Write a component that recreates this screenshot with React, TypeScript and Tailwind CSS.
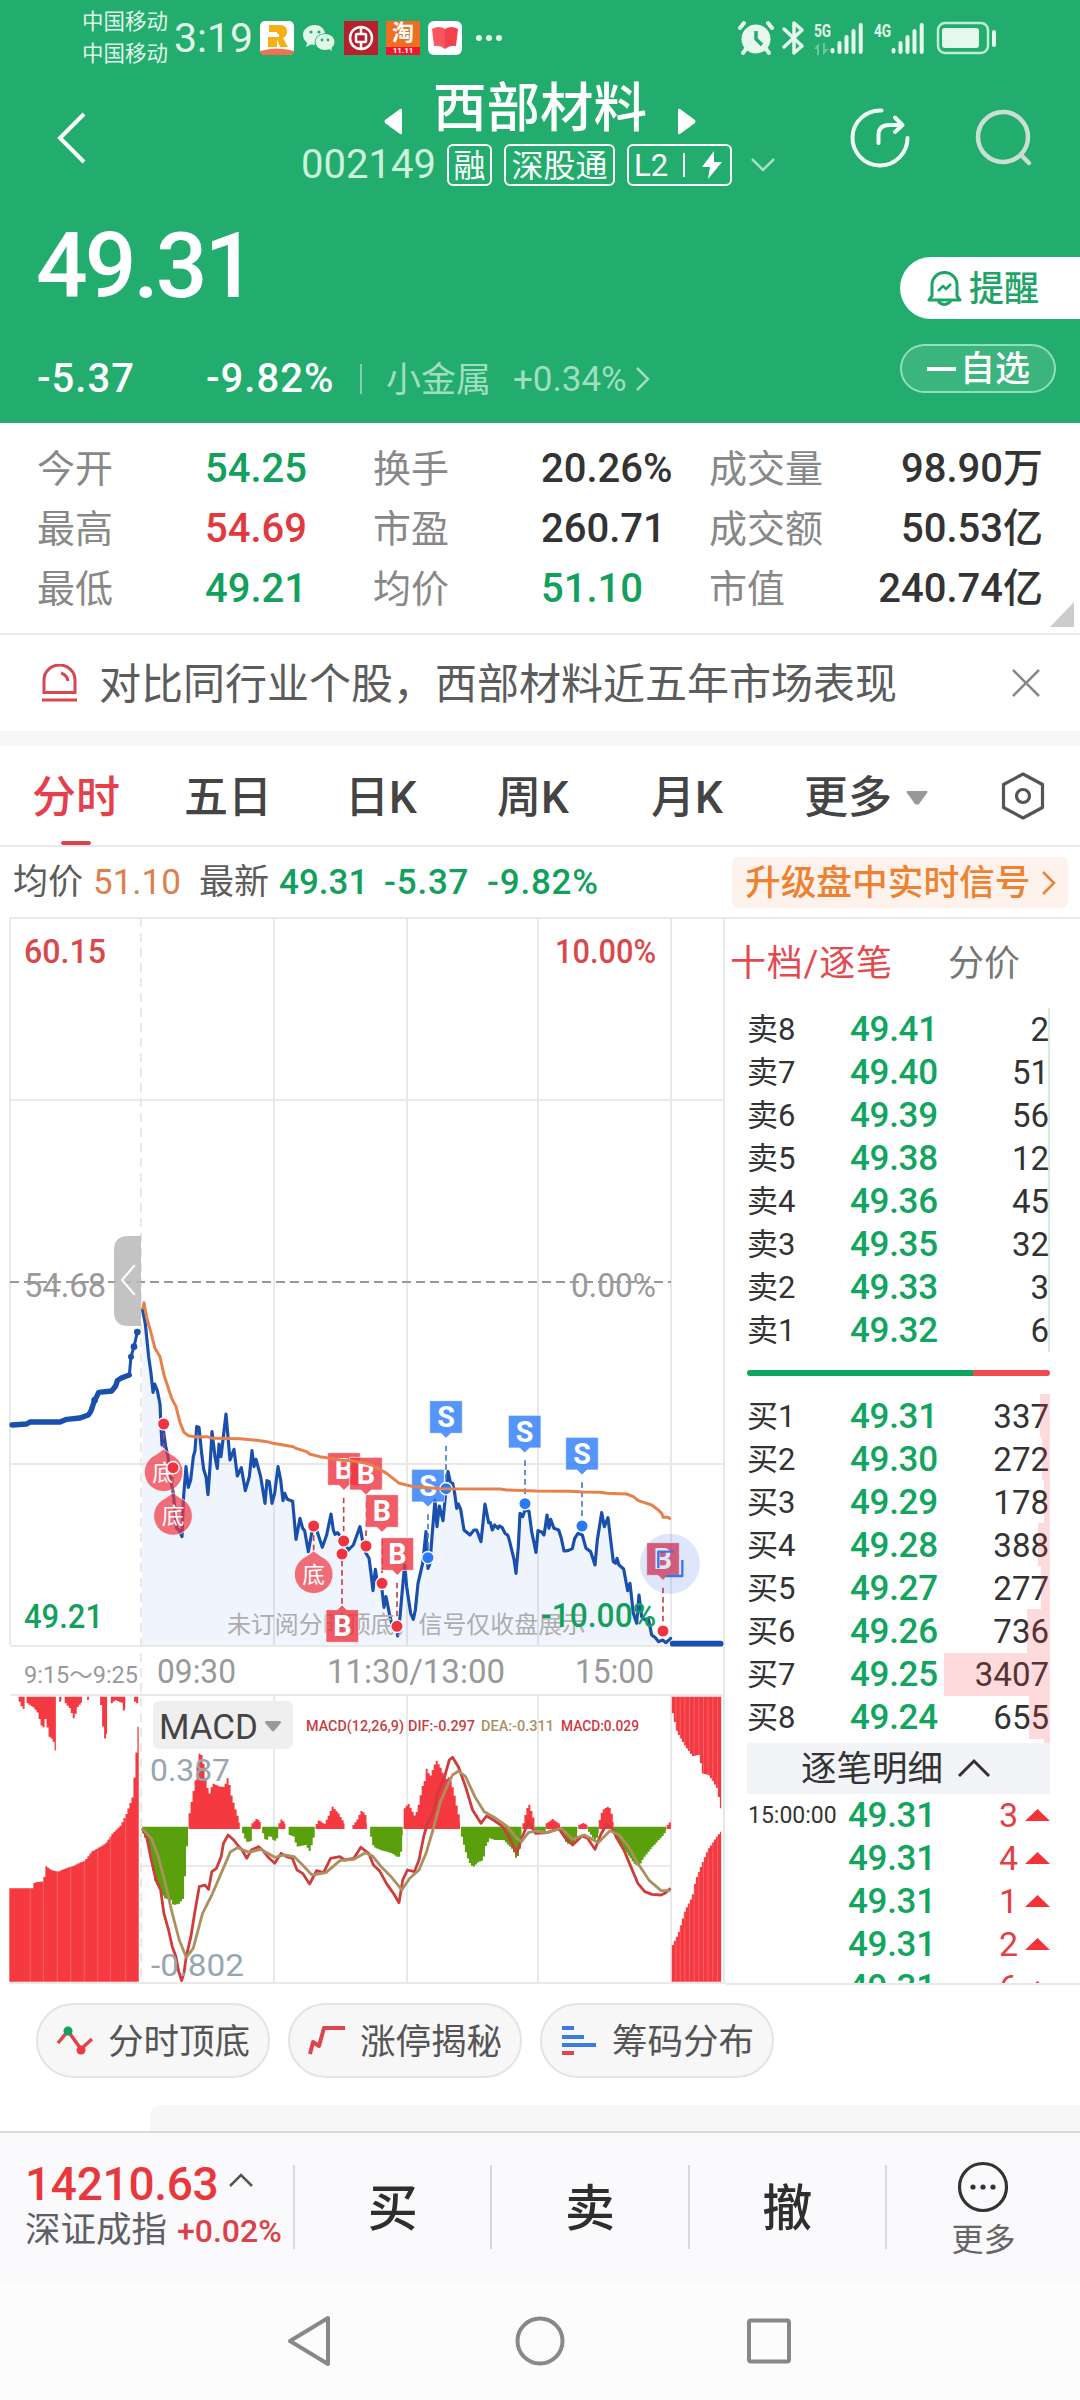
import React from 'react';

type Point = [number, number];

const stats = [
  { label: '今开', value: '54.25', color: 'text-[#12a05c]' },
  { label: '换手', value: '20.26%', color: 'text-[#333]' },
  { label: '成交量', value: '98.90万', color: 'text-[#333]' },
  { label: '最高', value: '54.69', color: 'text-[#e0393e]' },
  { label: '市盈', value: '260.71', color: 'text-[#333]' },
  { label: '成交额', value: '50.53亿', color: 'text-[#333]' },
  { label: '最低', value: '49.21', color: 'text-[#12a05c]' },
  { label: '均价', value: '51.10', color: 'text-[#12a05c]' },
  { label: '市值', value: '240.74亿', color: 'text-[#333]' },
];

const sells = [
  { label: '卖8', price: '49.41', qty: 2 },
  { label: '卖7', price: '49.40', qty: 51 },
  { label: '卖6', price: '49.39', qty: 56 },
  { label: '卖5', price: '49.38', qty: 12 },
  { label: '卖4', price: '49.36', qty: 45 },
  { label: '卖3', price: '49.35', qty: 32 },
  { label: '卖2', price: '49.33', qty: 3 },
  { label: '卖1', price: '49.32', qty: 6 },
];

const buys = [
  { label: '买1', price: '49.31', qty: 337, bar: 10 },
  { label: '买2', price: '49.30', qty: 272, bar: 8 },
  { label: '买3', price: '49.29', qty: 178, bar: 6 },
  { label: '买4', price: '49.28', qty: 388, bar: 12 },
  { label: '买5', price: '49.27', qty: 277, bar: 9 },
  { label: '买6', price: '49.26', qty: 736, bar: 23 },
  { label: '买7', price: '49.25', qty: 3407, bar: 106 },
  { label: '买8', price: '49.24', qty: 655, bar: 21 },
];

const ticks = [
  { time: '15:00:00', qty: 3 },
  { time: '', qty: 4 },
  { time: '', qty: 1 },
  { time: '', qty: 2 },
  { time: '', qty: 6 },
];

// Chart series, three units to one pixel
const preOpen =
  '36,675 80,672 90,666 180,666 200,658 240,654 265,645 272,635 276,624 284,600 290,590 296,577 335,573 347,558 352,542 362,535 388,525';

const morning =
  '428,330 436,372 446,470 453,520 459,577 464,552 472,572 480,612 482,660 486,735 490,690 497,738 505,775 510,830 520,880 530,985 537,990 546,1010 550,900 558,800 565,862 572,840 580,770 585,752 590,680 597,682 605,760 611,808 618,830 624,884 630,800 636,695 645,770 652,805 657,732 663,770 678,642 690,780 702,748 712,828 724,803 736,872 748,830 756,752 762,800 768,778 782,830 795,910 801,842 808,845 816,910 824,880 834,800 842,840 849,902 854,880 862,898 878,904 888,1018 900,955 908,985 914,992 925,1055 935,1000 941,978 950,990 967,1042 980,1005 993,942 1000,990 1005,1003 1013,998 1030,1022 1045,1050 1060,1035 1080,980 1090,1035 1098,1060 1107,1074 1113,1120 1119,1172 1126,1108 1132,1150 1145,1160 1152,1222 1158,1190 1168,1240 1175,1270 1190,1280 1193,1308';

const afternoon: Point[] = [
  [175, 840], [180, 800], [187, 720], [194, 645], [200, 710], [212, 790], [220, 808], [226, 780], [234, 700], [248, 640],
  [258, 545], [264, 655], [270, 640], [276, 560], [285, 450], [291, 530], [298, 468], [309, 512], [318, 420], [324, 365],
  [332, 400], [338, 400], [344, 430], [350, 475], [355, 462], [362, 478], [372, 540], [390, 555], [402, 540], [410, 540],
  [423, 575], [435, 462], [446, 518], [451, 518], [457, 540], [464, 525], [474, 535], [478, 528], [486, 532], [495, 550],
  [503, 555], [508, 570], [522, 628], [528, 670], [535, 590], [540, 490], [548, 500], [555, 480], [567, 484], [575, 545],
  [588, 607], [594, 542], [604, 545], [612, 555], [616, 530], [621, 495], [627, 535], [632, 508], [642, 535], [656, 540],
  [664, 565], [672, 603], [684, 602], [697, 596], [704, 565], [714, 550], [727, 555], [738, 595], [752, 605], [765, 645],
  [772, 570], [785, 488], [793, 530], [804, 503], [812, 570], [820, 635], [827, 640], [831, 625], [837, 645], [851, 657],
  [863, 722], [870, 700], [880, 790], [890, 820], [897, 735], [905, 800], [915, 810], [925, 805], [935, 855], [945, 862],
  [956, 875], [968, 870], [978, 878], [992, 865],
];

const average =
  '428,328 432,308 440,352 452,395 465,445 480,470 492,525 505,565 515,595 528,620 540,668 552,697 565,707 590,711 620,710 640,715 720,716 770,721 800,725 820,730 850,735 880,740 890,746 920,755 930,763 960,770 990,775 1020,780 1060,783 1090,788 1120,797 1160,820 1198,850 1240,860 1270,862 1320,866 1500,867 1520,870 1610,873 1710,874 1750,876 1800,877 1820,880 1880,882 1900,890 1915,902 1940,910 1955,915 1975,930 1985,940 1990,952 2005,952 2012,958';

const price = morning + ' ' + afternoon.map(([x, y]) => `${x + 1020},${y + 450}`).join(' ');

const dif =
  '305,445 315,470 325,540 335,600 345,630 352,700 362,750 370,800 378,830 383,870 390,902 395,880 400,830 410,770 418,700 428,620 440,615 448,628 455,575 465,565 475,530 480,490 490,465 502,480 512,498 520,510 530,535 540,510 555,500 565,512 575,530 590,550 604,520 615,530 628,535 638,570 650,580 665,612 680,572 695,578 710,535 730,530 740,540 760,535 775,502 792,520 802,555 815,572 830,610 845,640 857,668 865,600 875,570 890,575 900,540 910,470 918,430 930,400 940,340 955,290 965,240 972,232 985,262 1000,320 1015,390 1033,430 1045,408 1060,420 1080,440 1095,475 1110,520 1122,470 1135,425 1150,460 1175,458 1200,445 1215,475 1230,495 1250,468 1262,475 1278,508 1290,465 1303,432 1315,445 1325,475 1340,510 1355,560 1370,610 1385,635 1400,643 1420,645 1430,638 1440,625';

const dea =
  '305,445 325,475 340,530 355,610 370,700 385,780 400,832 415,805 435,700 455,645 475,580 495,515 510,503 535,517 560,508 590,532 610,525 632,530 650,555 670,585 700,578 730,542 760,538 785,518 800,528 820,562 840,590 863,630 880,595 900,570 915,520 930,450 945,370 960,320 972,285 985,273 1000,290 1020,350 1040,395 1065,415 1090,440 1110,475 1120,485 1135,458 1150,453 1175,458 1205,445 1230,477 1255,465 1285,488 1310,452 1330,465 1350,500 1370,550 1395,602 1420,632 1440,632';

const redBars: Point[][] = [
  [[405, 400], [412, 345], [418, 300], [425, 230], [428, 212], [434, 240], [440, 300], [447, 345], [455, 310], [470, 320], [480, 320], [488, 290], [494, 340], [502, 380], [510, 415], [515, 440]],
  [[540, 430], [550, 415], [560, 430]],
  [[598, 430], [603, 417], [613, 435]],
  [[678, 432], [683, 420], [695, 432], [703, 410], [712, 380], [725, 400], [740, 435]],
  [[757, 435], [765, 420], [774, 393], [782, 400], [788, 435]],
  [[867, 385], [875, 370], [882, 390], [890, 410], [898, 370], [905, 320], [911, 300], [914, 265], [922, 290], [935, 240], [945, 265], [955, 300], [963, 290], [972, 330], [980, 385], [988, 430]],
  [[1122, 430], [1128, 395], [1134, 370], [1142, 405], [1148, 435]],
  [[1172, 430], [1185, 417], [1203, 435]],
  [[1242, 435], [1252, 428], [1262, 438]],
  [[1286, 420], [1292, 390], [1306, 378], [1314, 410], [1318, 440]],
  [[1432, 435], [1441, 420]],
];

const greenBars: Point[][] = [
  [[305, 460], [315, 490], [325, 560], [330, 600], [345, 640], [352, 655], [365, 660], [370, 675], [382, 672], [392, 655], [396, 575], [400, 490], [404, 450]],
  [[520, 460], [527, 485], [537, 485], [541, 450]],
  [[563, 460], [569, 485], [578, 465], [587, 485], [596, 470], [598, 448]],
  [[620, 465], [630, 470], [635, 500], [655, 495], [664, 515], [670, 480], [676, 455]],
  [[795, 470], [800, 500], [815, 510], [828, 515], [840, 520], [850, 530], [858, 530], [862, 490], [865, 450]],
  [[990, 470], [997, 510], [1005, 545], [1014, 562], [1025, 547], [1036, 540], [1041, 500], [1050, 475], [1060, 480], [1080, 480], [1090, 495], [1100, 510], [1108, 540], [1116, 500], [1120, 460]],
  [[1148, 452], [1172, 458]],
  [[1205, 460], [1215, 490], [1232, 495], [1240, 455]],
  [[1263, 455], [1275, 480], [1283, 470], [1286, 450]],
  [[1318, 460], [1330, 490], [1345, 520], [1360, 550], [1370, 560], [1380, 535], [1400, 500], [1420, 470], [1431, 450]],
];

const auctionTop: Point[][] = [
  [[40, 65], [48, 90], [53, 60]],
  [[57, 70], [68, 80], [78, 95], [90, 150], [96, 115], [104, 170], [112, 180], [120, 228]],
  [[127, 65], [132, 60]],
  [[139, 70], [148, 85], [157, 118], [165, 80], [176, 65]],
  [[187, 60], [191, 60]],
  [[215, 75], [220, 150], [227, 200], [230, 70]],
  [[238, 70], [246, 60], [262, 70], [266, 118], [269, 70]],
  [[288, 65], [297, 75]],
];
const auctionBottom: Point[] = [[20, 625], [68, 625], [72, 607], [92, 604], [96, 557], [108, 570], [122, 575], [140, 565], [160, 555], [182, 540], [195, 515], [210, 503], [225, 490], [240, 460], [258, 435], [270, 400], [283, 350], [290, 240], [294, 140], [298, 140]];
const closeTop: Point[] = [[1443, 100], [1452, 155], [1468, 195], [1485, 228], [1500, 225], [1507, 280], [1520, 285], [1530, 305], [1540, 330], [1545, 385], [1549, 385]];
const closeBottom: Point[] = [[1443, 795], [1455, 760], [1470, 690], [1485, 650], [1492, 600], [1505, 555], [1518, 510], [1535, 475], [1549, 450]];

// Turns a profile into a run of thin bars standing on the base line
const barPath = (profile: Point[], base: number) => {
  const step = 4.3;
  const end = profile[profile.length - 1][0];
  let d = `M${profile[0][0]} ${base}`;
  for (let x = profile[0][0]; x < end; x += step) {
    const i = Math.max(1, profile.findIndex((p) => p[0] > x));
    const [x0, y0] = profile[i - 1];
    const [x1, y1] = profile[i];
    const y = y0 + ((y1 - y0) * (x - x0)) / (x1 - x0);
    d += `V${y.toFixed(1)}H${Math.min(x + step, end).toFixed(1)}`;
  }
  return d + `V${base}Z`;
};

type LabelProps = {
  x: number;
  y: number;
  width: number;
  size: number;
  fill: string;
  weight?: number;
  children: string;
};

const Label: React.FC<LabelProps> = ({ x, y, width, size, fill, weight = 400, children }) => (
  <text x={x} y={y} textLength={width} lengthAdjust="spacingAndGlyphs" fontSize={size} fill={fill} fontWeight={weight}>
    {children}
  </text>
);

type FlagProps = { x: number; y: number; dot: Point; kind: 'B' | 'S'; up?: boolean };

const Flag: React.FC<FlagProps> = ({ x, y, dot, kind, up }) => {
  const color = kind === 'B' ? '#ef3340' : '#2a7af8';
  const line = kind === 'B' ? '#c9404c' : '#3f7fd0';
  return (
    <g>
      <path d={up ? `M${dot[0]} ${y - 18}V${dot[1]}` : `M${dot[0]} ${y + 135}V${dot[1]}`} stroke={line} strokeWidth="5" strokeDasharray="17 11" />
      <path
        d={
          up
            ? `M${x} ${y}H${x + 34}L${x + 48} ${y - 14}L${x + 62} ${y}H${x + 98}V${y + 98}H${x}Z`
            : `M${x} ${y}H${x + 98}V${y + 98}H${x + 64}L${x + 49} ${y + 113}L${x + 34} ${y + 98}H${x}Z`
        }
        fill={color}
        fillOpacity="0.8"
        stroke="#fff"
        strokeOpacity="0.7"
        strokeWidth="3"
      />
      <text x={x + 49} y={y + 80} fontSize="86" fontWeight="700" fill="#fff" textAnchor="middle">
        {kind}
      </text>
      <circle cx={dot[0]} cy={dot[1]} r="18.5" fill={color} stroke="#fff" strokeWidth="4" />
    </g>
  );
};

const Bottom: React.FC<{ x: number; y: number }> = ({ x, y }) => (
  <g>
    <path d={`M${x} ${y}V${y + 75}`} stroke="#c9404c" strokeWidth="5" strokeDasharray="17 11" />
    <path
      d={`M${x} ${y + 75}L${x + 22} ${y + 91}A58 58 0 1 1 ${x - 22} ${y + 91}Z`}
      fill="#ef3340"
      fillOpacity="0.7"
      stroke="#fff"
      strokeOpacity="0.7"
      strokeWidth="3"
    />
    <text x={x} y={y + 170} fontSize="68" fill="#fff" textAnchor="middle">
      底
    </text>
    <circle cx={x} cy={y} r="18.5" fill="#ef3340" stroke="#fff" strokeWidth="4" />
  </g>
);

const SignalBars = () => (
  <svg width="34" height="33" viewBox="0 0 34 33" stroke="#e6f8ee" strokeWidth="4" strokeLinecap="round">
    <path d="M2.5 28v1.500M9.500 21v9M16.500 15v15M23.500 9v21M30.700 3v27" />
  </svg>
);

const StatusBar = () => (
  <div className="flex h-[76px] items-center pl-[82px] text-[#e0f7ea]">
    <div className="flex w-[90px] flex-col gap-[10px] text-[21.5px] leading-[22px]">
      <span>中国移动</span>
      <span>中国移动</span>
    </div>
    <span className="ml-[2px] w-[84px] text-[41px] leading-none">3:19</span>
    <div className="ml-[2px] flex gap-2">
      <svg width="34" height="34" viewBox="0 0 34 34">
        <rect width="34" height="34" rx="5" fill="#fff" />
        <path d="M9 4h11q7 0 7 7 0 4-4 6l5 9h-8l-3-8v8H8V16h9V11H9z" fill="#f6b016" />
        <path d="M0 30q17-5 34 0v0q0 4-5 4H5q-5 0-5-4z" fill="#ef7350" />
        <path d="M8 13h11v3H8z" fill="#fff" />
      </svg>
      <svg width="34" height="34" viewBox="0 0 34 34" fill="#e0f7ea">
        <path d="M13 4C6 4 1 8.500 1 14q0 4.500 4 7.500L4 26l5-2.500 4 .500q-2-10 10-12C22 7 18 4 13 4z" />
        <ellipse cx="23" cy="21" rx="9.500" ry="8" />
        <path d="M26 27l4 3-1-5z" />
        <g fill="#22ac6e">
          <circle cx="9" cy="11" r="1.600" />
          <circle cx="17" cy="11" r="1.600" />
          <circle cx="20" cy="19" r="1.400" />
          <circle cx="26" cy="19" r="1.400" />
        </g>
      </svg>
      <svg width="34" height="34" viewBox="0 0 34 34" fill="none" stroke="#fff">
        <rect width="34" height="34" fill="#b8202b" stroke="none" />
        <circle cx="17" cy="17" r="11" strokeWidth="2.500" />
        <rect x="12" y="13" width="10" height="8" rx="1" strokeWidth="2.500" />
        <path d="M17 6v7M17 21v7" strokeWidth="2.500" />
      </svg>
      <div className="flex h-[34px] w-[34px] flex-col items-center bg-[#ee6f22]">
        <span className="h-[26px] text-[22px] leading-[24px] font-bold text-white">淘</span>
        <span className="h-2 w-full bg-[#f0152d] text-center text-[8px] leading-[7px] font-bold text-white">11.11</span>
      </div>
      <svg width="34" height="34" viewBox="0 0 34 34">
        <rect width="34" height="34" rx="6" fill="#fff" />
        <path d="M4 8q7-4 13 0v20q-5-4-11-3z" fill="#fb5560" />
        <path d="M30 8q-7-4-13 0v20q5-4 11-3z" fill="#f4414e" />
      </svg>
    </div>
    <svg className="ml-[13px]" width="28" height="8" viewBox="0 0 28 8" fill="#e0f7ea">
      <circle cx="4" cy="4" r="3" />
      <circle cx="14" cy="4" r="3" />
      <circle cx="24" cy="4" r="3" />
    </svg>
    <svg className="ml-[235px]" width="36" height="36" viewBox="0 0 36 36">
      <circle cx="18" cy="19" r="14.500" fill="#e6f8ee" />
      <path d="M2 8l4-5M34 8l-4-5M8 29l-3 4M28 29l3 4" stroke="#e6f8ee" strokeWidth="4" strokeLinecap="round" />
      <path d="M18 11v8l6 6" stroke="#22ac6e" strokeWidth="3.500" fill="none" />
    </svg>
    <svg className="ml-[7px]" width="24" height="36" viewBox="0 0 24 36" fill="none" stroke="#e6f8ee" strokeWidth="3.500" strokeLinejoin="round" strokeLinecap="round">
      <path d="M3 9l18 17-8 7V3l8 7L3 27" />
    </svg>
    <div className="ml-[9px] flex">
      <div className="flex w-4 flex-col gap-1">
        <span className="origin-left scale-x-[0.72] text-[19px] leading-[17px] font-bold">5G</span>
        <svg width="15" height="12" viewBox="0 0 15 12" fill="#69c89c">
          <path d="M5 0v12H3V6H0zM9 12V0h2v6h4z" />
        </svg>
      </div>
      <SignalBars />
    </div>
    <div className="ml-[10px] flex">
      <span className="w-[17px] origin-left scale-x-[0.72] text-[19px] leading-[17px] font-bold">4G</span>
      <SignalBars />
    </div>
    <svg className="ml-[11px]" width="62" height="34" viewBox="0 0 62 34">
      <rect x="2" y="2" width="50" height="30" rx="7" fill="none" stroke="#bdeed5" strokeWidth="2.500" />
      <rect x="6" y="7" width="37" height="20" rx="3" fill="#e6f8ee" />
      <rect x="56" y="9" width="4" height="17" rx="2" fill="#e6f8ee" />
    </svg>
  </div>
);

const Header = () => (
  <header className="h-[423px] bg-[#22ac6e] text-white">
    <StatusBar />
    <div className="flex h-[124px] items-start">
      <svg className="mt-[36px] ml-[56px]" width="32" height="52" viewBox="0 0 32 52" fill="none" stroke="#fff" strokeWidth="4">
        <path d="M28 2L4 26l24 24" />
      </svg>
      <div className="ml-[213px] flex w-[478px] flex-col">
        <div className="flex h-[64px] items-start pl-[83px]">
          <svg className="mt-[32px]" width="18" height="27" viewBox="0 0 18 27" fill="#fff">
            <path d="M18 2v23q0 2-2 1L1 15q-1-1 0-3L16 1q2-1 2 1z" />
          </svg>
          <span className="mt-[6px] ml-[31px] w-[213px] text-[53.5px] leading-none font-medium">西部材料</span>
          <svg className="mt-[32px] ml-[32px]" width="18" height="27" viewBox="0 0 18 27" fill="#fff">
            <path d="M0 2v23q0 2 2 1l15-11q1-1 0-3L2 1Q0 0 0 2z" />
          </svg>
        </div>
        <div className="mt-[4px] flex h-[42px] items-center">
          <span className="w-[146px] text-[40px] leading-none text-[#ccf2de]">002149</span>
          <span className="flex h-[42px] w-[45px] items-center justify-center rounded-md border-2 border-white pt-[2px] text-[32px] leading-none">融</span>
          <span className="ml-3 flex h-[42px] w-[111px] items-center justify-center rounded-md border-2 border-white pt-[2px] text-[32px] leading-none">深股通</span>
          <span className="ml-3 flex h-[42px] w-[105px] items-center rounded-md border-2 border-white pl-[5px] text-[31px] leading-none">
            L2
            <i className="ml-[15px] h-6 w-[2px] bg-white" />
            <svg className="ml-4" width="22" height="28" viewBox="0 0 22 28" fill="#fff">
              <path d="M13 0L1 16h8L7 28 21 11h-8z" />
            </svg>
          </span>
          <svg className="ml-[18px]" width="26" height="16" viewBox="0 0 26 16" fill="none" stroke="#a5dfc3" strokeWidth="2.500">
            <path d="M2 2l11 11L24 2" />
          </svg>
        </div>
      </div>
      <svg className="mt-[31px] ml-[70px]" width="64" height="62" viewBox="0 0 64 62" fill="none" stroke="#f0fff7" strokeWidth="4" strokeLinecap="round" strokeLinejoin="round">
        <path d="M32.500 3.500A27.500 27.500 0 1 0 58.500 31" />
        <path d="M29.500 36v-8q0-10 11-10H52M46 10.500l7.500 7.500-7.500 7" />
      </svg>
      <svg className="mt-[32px] ml-[60px]" width="60" height="60" viewBox="0 0 60 60" fill="none" stroke="#c9dfd3" strokeWidth="4.500" strokeLinecap="round">
        <circle cx="30" cy="29" r="25" />
        <path d="M49 48l7 7" />
      </svg>
    </div>
    <div className="flex h-[223px] justify-between">
      <div className="flex flex-col">
        <span className="mt-[21px] ml-[36px] text-[91px] leading-none font-medium tracking-[-3px]">49.31</span>
        <div className="mt-[47px] ml-[37px] flex items-center text-[40px] leading-none font-medium">
          <span className="w-[169px] tracking-[1px]">-5.37</span>
          <span className="w-[154px] tracking-[1px]">-9.82%</span>
          <i className="h-[30px] w-[2px] bg-[#7fd0a8]" />
          <span className="ml-[24px] w-[127px] pt-[2px] text-[35px] font-normal text-[#a0dec0]">小金属</span>
          <span className="w-[122px] text-[35px] font-normal text-[#a0dec0]">+0.34%</span>
          <svg width="16" height="26" viewBox="0 0 16 26" fill="none" stroke="#a0dec0" strokeWidth="2.500">
            <path d="M2 2l11 11L2 24" />
          </svg>
        </div>
      </div>
      <div className="flex w-[180px] flex-col">
        <div className="mt-[57px] flex h-[62px] items-center rounded-l-full bg-white pl-[27px] text-[35px] leading-none text-[#1fa467]">
          <svg className="mr-[7px]" width="35" height="36" viewBox="0 0 35 36" fill="none" stroke="#1fa467" strokeWidth="3" strokeLinejoin="round">
            <path d="M5 26V15a12.500 12.500 0 0 1 25 0v11l3 4H2z" />
            <path d="M11 21l5-5 3 3 5-5" strokeWidth="2.500" />
            <path d="M11 31q6 7 13 0" />
          </svg>
          <span className="pt-[3px] font-medium">提醒</span>
        </div>
        <div className="mt-[25px] flex h-[49px] w-[156px] items-center rounded-full border-2 border-[#8fe0b8] bg-[#3bb47e] pl-[25px] text-[35px] leading-none">
          <i className="mr-1 h-[4px] w-[29px] bg-white" />
          <span className="pt-[2px] font-medium">自选</span>
        </div>
      </div>
    </div>
  </header>
);

const Stats = () => (
  <div className="flex h-[212px] border-b-2 border-[#ebebeb]">
    <div className="mt-[16px] grid h-[180px] grid-cols-[168px_168px_168px_168px_115px_219px] grid-rows-3 items-center pl-[37px] text-[40px] leading-none">
      {stats.map((item, i) => (
        <React.Fragment key={item.label}>
          <span className="text-[38px] text-[#888]">{item.label}</span>
          <span className={`${item.color} font-medium ${i % 3 === 2 ? 'text-right' : ''}`}>{item.value}</span>
        </React.Fragment>
      ))}
    </div>
    <svg className="mt-[179px] ml-[7px]" width="24" height="25" viewBox="0 0 24 25" fill="#ccc">
      <path d="M24 0v25H0z" />
    </svg>
  </div>
);

const Notice = () => (
  <div className="flex h-[96px] items-center pr-[40px] pl-[41px]">
    <svg width="37" height="38" viewBox="0 0 37 38" fill="none" stroke="#d6474f" strokeWidth="3">
      <path d="M3 28.500V16a15.500 15 0 0 1 31 0v12.500z" />
      <path d="M1 36h35" />
      <path d="M20 9q6 2 7 8" />
    </svg>
    <span className="ml-[21px] flex-1 pt-[3px] text-[42px] leading-none text-[#5c5c5c]">对比同行业个股，西部材料近五年市场表现</span>
    <svg width="28" height="28" viewBox="0 0 28 28" stroke="#888" strokeWidth="2.500">
      <path d="M1 1l26 26M27 1L1 27" />
    </svg>
  </div>
);

const Tabs = () => (
  <div className="flex h-[101px] border-b-2 border-[#e8e8e8] pl-[32px] text-[44px] leading-none font-medium text-[#444]">
    <div className="flex w-[152px] flex-col">
      <span className="mt-[30px] text-[#e63e4b]">分时</span>
      <i className="mt-[21px] ml-[29px] h-1 w-[30px] rounded-sm bg-[#d9434f]" />
    </div>
    <span className="mt-[30px] w-[161px]">五日</span>
    <span className="mt-[30px] w-[152px]">日K</span>
    <span className="mt-[30px] w-[154px]">周K</span>
    <span className="mt-[30px] w-[153px]">月K</span>
    <span className="mt-[30px] w-[88px]">更多</span>
    <svg className="mt-[45px] ml-[14px]" width="22" height="14" viewBox="0 0 22 14" fill="#999">
      <path d="M1 0h20q1 1 0 2l-8 11q-2 1-4 0L1 2Q0 1 1 0z" />
    </svg>
    <svg className="mt-[25px] ml-[73px]" width="44" height="50" viewBox="0 0 44 50" fill="none" stroke="#555" strokeWidth="3.200" strokeLinejoin="round">
      <path d="M22 3L41.500 13.500v23L22 47 2.500 36.500v-23z" />
      <circle cx="22" cy="25" r="6.500" />
    </svg>
  </div>
);

const InfoRow = () => (
  <div className="flex h-[70px] items-center pt-[1px] pl-[13px] text-[35px] leading-none">
    <span className="w-[80px] text-[#5c5c5c]">均价</span>
    <span className="w-[106px] text-[#dc7f4c]">51.10</span>
    <span className="w-[80px] text-[#5c5c5c]">最新</span>
    <span className="w-[105px] font-medium text-[#12a05c]">49.31</span>
    <span className="w-[103px] font-medium tracking-[0.8px] text-[#12a05c]">-5.37</span>
    <span className="font-medium tracking-[0.8px] text-[#12a05c]">-9.82%</span>
    <div className="mr-3 ml-auto flex h-[51px] w-[336px] items-center rounded-md bg-[#fef3ec] pl-[13px] text-[35.7px] font-medium text-[#ec8232]">
      <span className="pt-[2px]">升级盘中实时信号</span>
      <svg className="ml-[10px]" width="16" height="26" viewBox="0 0 16 26" fill="none" stroke="#ec8232" strokeWidth="2.500">
        <path d="M2 2l11 11L2 24" />
      </svg>
    </div>
  </div>
);

const Chart = () => (
  <svg className="block shrink-0" width="726" height="1068" viewBox="0 917 726 1068">
    <g stroke="#e9e9e9" strokeWidth="2" fill="none">
      <path d="M10 918H726M10 918V1645M10 1100H724M10 1464H724M10 1646H724M724 918V1984M10 1695H724M10 1983H726" />
      <path d="M274 918V1645M407 918V1645M538 918V1645M671 918V1645M274 1695V1983M407 1695V1983M538 1695V1983M671 1695V1983M141 1866H671" />
      <path d="M141 918V1983" strokeDasharray="9 6" />
    </g>

    <Label x={24} y={963} width={82} size={34} fill="#d9484c" weight={500}>60.15</Label>
    <Label x={555} y={963} width={101} size={34} fill="#d9484c" weight={500}>10.00%</Label>
    <Label x={24} y={1297} width={82} size={34} fill="#999">54.68</Label>
    <Label x={571} y={1297} width={85} size={34} fill="#999">0.00%</Label>
    <Label x={24} y={1628} width={79} size={34} fill="#12a05c" weight={500}>49.21</Label>
    <path d="M10 1282H671" stroke="#999" strokeWidth="2" strokeDasharray="9 5" />

    <g transform="translate(0 1200) scale(.33333)" strokeLinejoin="round" strokeLinecap="round">
      <polygon points={`425,1335 ${price} 2012,1335`} fill="#2a62d8" fillOpacity="0.07" />
      <polyline points={preOpen} fill="none" stroke="#1a50ad" strokeWidth="16" />
      <polyline points="388,525 393,470 402,440 412,396" fill="none" stroke="#1a50ad" strokeWidth="9" />
      <g fill="#1a50ad">
        <circle cx="284" cy="600" r="10" />
        <circle cx="393" cy="470" r="9" />
        <circle cx="402" cy="440" r="10" />
        <circle cx="412" cy="396" r="10" />
      </g>
      <polyline points={price} fill="none" stroke="#1a50ad" strokeWidth="9.500" />
      <path d="M2018 1331H2162" stroke="#1a50ad" strokeWidth="17" />
      <path d="M423 108V378H385Q342 378 342 335V150Q342 108 385 108Z" fill="#b8b8b8" fillOpacity="0.85" />
      <path d="M403 197L366 240L403 283" fill="none" stroke="#fff" strokeWidth="6" />
    </g>

    <Label x={227} y={1633} width={359} size={24} fill="#adadad">未订阅分时顶底，信号仅收盘展示</Label>
    <Label x={541} y={1627} width={115} size={34} fill="#12a05c" weight={500}>-10.00%</Label>

    <g transform="translate(0 1200) scale(.33333)" strokeLinejoin="round">
      <Bottom x={491} y={672} />
      <Bottom x={519} y={803} />
      <Bottom x={941} y={978} />
      <Flag kind="B" x={983} y={758} dot={[1031, 1023]} />
      <Flag kind="B" x={1049} y={772} dot={[1098, 1038]} />
      <Flag kind="B" x={1097} y={884} dot={[1146, 1150]} />
      <Flag kind="B" x={1143} y={1013} dot={[1191, 1279]} />
      <Flag kind="B" x={978} y={1229} dot={[1026, 1062]} up />
      <Flag kind="S" x={1235} y={808} dot={[1284, 1073]} />
      <Flag kind="S" x={1289} y={602} dot={[1338, 866]} />
      <Flag kind="S" x={1525} y={646} dot={[1575, 911]} />
      <Flag kind="S" x={1697} y={712} dot={[1746, 978]} />
      <Flag kind="B" x={1940} y={1028} dot={[1989, 1293]} />
      <circle cx="2010" cy="1091" r="90" fill="#2a62e8" fillOpacity="0.16" />
      <path d="M1975 1105V1055H2022M2047 1080V1128H1998" fill="none" stroke="#3a76ea" strokeWidth="7" />
      <polyline points={average} fill="none" stroke="#e8804c" strokeWidth="9" />
    </g>

    <Label x={24} y={1683} width={114} size={23} fill="#999">9:15～9:25</Label>
    <Label x={157} y={1683} width={79} size={33} fill="#999">09:30</Label>
    <Label x={327} y={1683} width={178} size={33} fill="#999">11:30/13:00</Label>
    <Label x={575} y={1683} width={79} size={33} fill="#999">15:00</Label>

    <rect x="153" y="1701" width="140" height="48" rx="6" fill="#efefef" />
    <Label x={159} y={1739} width={99} size={35} fill="#444">MACD</Label>
    <path d="M266 1721H280Q282 1722 280 1724L274 1731Q273 1732 272 1731L266 1724Q264 1722 266 1721Z" fill="#999" />
    <g transform="translate(0 1680) scale(.46557 .33333)">
      <g fill="#f53941">
        {auctionTop.map((bars, i) => (
          <path key={i} d={barPath(bars, 50)} />
        ))}
        <path d={barPath(auctionBottom, 905)} />
        <path d={barPath(closeTop, 50)} />
        <path d={barPath(closeBottom, 905)} />
        {redBars.map((bars, i) => (
          <path key={i} d={barPath(bars, 447)} />
        ))}
      </g>
      <g fill="#5aa00c">
        {greenBars.map((bars, i) => (
          <path key={i} d={barPath(bars, 440)} />
        ))}
      </g>
      <path
        d="M65 625V905M93 604V905M123 575V905M152 558V905M181 541V905M210 503V905M237 470V905M270 400V905M1452 50V155M1461 50V175M1471 50V200M1481 50V220M1491 50V225M1501 50V230M1511 50V280M1521 50V285M1531 50V305M1541 50V330M1452 770V905M1461 735V905M1471 690V905M1481 660V905M1491 610V905M1501 570V905M1511 540V905M1521 505V905M1531 485V905M1541 465V905"
        stroke="#fff"
        strokeOpacity="0.35"
        strokeWidth="1.500"
      />
      <g fill="none" strokeWidth="2.800" strokeLinejoin="round">
        <polyline points={dif} stroke="#cf3c3c" vectorEffect="non-scaling-stroke" />
        <polyline points={dea} stroke="#ab9060" vectorEffect="non-scaling-stroke" />
      </g>
    </g>
    <Label x={306} y={1731} width={98} size={15} fill="#c63f42" weight={500}>MACD(12,26,9)</Label>
    <Label x={408} y={1731} width={67} size={15} fill="#c63f42" weight={500}>DIF:-0.297</Label>
    <Label x={481} y={1731} width={73} size={15} fill="#ab9060" weight={500}>DEA:-0.311</Label>
    <Label x={561} y={1731} width={78} size={15} fill="#d0383f" weight={500}>MACD:0.029</Label>
    <Label x={150} y={1781} width={80} size={32} fill="#98a6b2">0.387</Label>
    <Label x={151} y={1976} width={93} size={32} fill="#98a6b2">-0.802</Label>
  </svg>
);

const OrderBook = () => (
  <div className="flex h-[1068px] w-[354px] flex-col overflow-hidden border-y-2 border-[#e9e9e9] leading-none">
    <div className="flex h-[89px] shrink-0 items-center pl-[4px] text-[36px]">
      <span className="w-[218px] tracking-[0.8px] text-[#e34a50]">十档/逐笔</span>
      <span className="text-[#777]">分价</span>
    </div>
    <div className="ml-[21px] w-[303px] shrink-0 border-r-2 border-[#d5ebe0]">
      {sells.map((row) => (
        <div key={row.label} className="flex h-[43px] items-center text-[#333]">
          <span className="w-[103px] text-[31px]">{row.label}</span>
          <span className="text-[35px] font-medium tracking-[-0.3px] text-[#12a560]">{row.price}</span>
          <span className="-mr-[1px] ml-auto text-[33px]">{row.qty}</span>
        </div>
      ))}
    </div>
    <div className="my-[18px] ml-[21px] flex h-[6px] w-[303px] shrink-0 overflow-hidden rounded-full">
      <i className="w-[226px] bg-[#0ba560]" />
      <i className="flex-1 bg-[#f04b4f]" />
    </div>
    <div className="ml-[21px] w-[303px] shrink-0">
      {buys.map((row) => (
        <div key={row.label} className="relative flex h-[43.1px] items-center pt-[1px] text-[#333]">
          <span className="w-[103px] text-[31px]">{row.label}</span>
          <span className="text-[35px] font-medium tracking-[-0.3px] text-[#12a560]">{row.price}</span>
          <span className="ml-auto pr-[1px] text-[33px]">{row.qty}</span>
          <i className="absolute top-0 right-0 h-full bg-[#f5333f]/18" style={{ width: row.bar }} />
        </div>
      ))}
      <i className="ml-auto block h-[4px] w-[6px] bg-[#fcd9dc]" />
    </div>
    <div className="ml-[21px] flex h-[51px] w-[303px] shrink-0 items-center bg-[#f2f4f8] pl-[54px] text-[35.5px] text-[#333]">
      <span className="pt-[2px]">逐笔明细</span>
      <svg className="ml-[14px]" width="34" height="20" viewBox="0 0 34 20" fill="none" stroke="#333" strokeWidth="3">
        <path d="M2 18L17 3l15 15" />
      </svg>
    </div>
    <div className="ml-[21px] w-[303px] shrink-0">
      {ticks.map((tick, i) => (
        <div key={i} className="flex h-[43px] items-center">
          <span className="w-[101px] pl-[1px] text-[23px] text-[#333]">{tick.time}</span>
          <span className="text-[35px] font-medium tracking-[-0.3px] text-[#12a560]">49.31</span>
          <span className="ml-auto text-[34px] text-[#e34045]">{tick.qty}</span>
          <svg className="ml-[7px]" width="25" height="12" viewBox="0 0 25 12" fill="#f53237">
            <path d="M12.500 0L25 12H0z" />
          </svg>
        </div>
      ))}
    </div>
  </div>
);

const chips = [
  {
    name: '分时顶底',
    icon: (
      <>
        <path d="M2 18L12 6L25 24L36 14" stroke="#e0454c" strokeWidth="3.500" />
        <circle cx="12" cy="6" r="4.500" fill="#12a05c" />
        <circle cx="25" cy="25" r="4.500" fill="#ef3a40" />
      </>
    ),
  },
  {
    name: '涨停揭秘',
    icon: <path d="M2 29L5 17L11 21L16 3H37" stroke="#e0454c" strokeWidth="4" />,
  },
  {
    name: '筹码分布',
    icon: (
      <>
        <path d="M2 3h12M2 12h22M2 20h34" stroke="#3c7be6" strokeWidth="4" />
        <path d="M2 28h12" stroke="#e0454c" strokeWidth="4" />
      </>
    ),
  },
];

const Chips = () => (
  <div className="flex h-[120px] gap-[18px] pt-[18px] pl-[36px]">
    {chips.map((chip) => (
      <div key={chip.name} className="flex h-[75px] w-[234px] items-center rounded-full border-2 border-[#e4e4e4] bg-[#f7f7f7] pl-[18px] text-[35.5px] leading-none text-[#555]">
        <svg className="mr-[13px]" width="39" height="32" viewBox="0 0 39 32" fill="none" strokeLinejoin="round">
          {chip.icon}
        </svg>
        <span className="pt-[5px]">{chip.name}</span>
      </div>
    ))}
  </div>
);

const TradeBar = () => (
  <div className="flex h-[151px] border-t-2 border-[#d9d9dc] bg-[#fafafc] leading-none">
    <div className="flex w-[293px] flex-col pt-[28px] pl-[25px]">
      <div className="flex items-center text-[46px] font-medium tracking-[-0.3px] text-[#e8383c]">
        14210.63
        <svg className="-mt-[8px] ml-[10px]" width="26" height="15" viewBox="0 0 26 15" fill="none" stroke="#555" strokeWidth="2.500">
          <path d="M2 13L13 2l11 11" />
        </svg>
      </div>
      <div className="mt-[6px] flex items-center text-[35.5px] text-[#5f6066]">
        深证成指
        <span className="ml-[10px] text-[32px] font-medium text-[#dc4147]">+0.02%</span>
      </div>
    </div>
    {['买', '卖', '撤'].map((name) => (
      <div key={name} className="mt-[32px] flex h-[84px] w-[197.300px] items-center justify-center border-l-2 border-[#d9d9dc] pt-[4px] text-[50px] font-medium text-[#2e2e2e]">
        {name}
      </div>
    ))}
    <div className="mt-[32px] h-[84px] w-[2px] bg-[#d9d9dc]" />
    <div className="flex flex-1 flex-col items-center pt-[28px] text-[32px] text-[#666]">
      <svg width="52" height="52" viewBox="0 0 52 52" fill="#333">
        <circle cx="26" cy="26" r="23.500" fill="none" stroke="#333" strokeWidth="3.200" />
        <circle cx="16" cy="26" r="2.600" />
        <circle cx="26" cy="26" r="2.600" />
        <circle cx="36" cy="26" r="2.600" />
      </svg>
      <span className="mt-[11px]">更多</span>
    </div>
  </div>
);

const NavBar = () => (
  <div className="flex h-[118px] items-center bg-[#fcfcfc] pl-[285px]">
    <svg width="46" height="54" viewBox="0 0 46 54" fill="none" stroke="#888" strokeWidth="4" strokeLinejoin="round">
      <path d="M43 4v46L5 27z" />
    </svg>
    <svg className="ml-[184px]" width="50" height="50" viewBox="0 0 50 50" fill="none" stroke="#888" strokeWidth="4">
      <circle cx="25" cy="25" r="22.500" />
    </svg>
    <svg className="ml-[180px]" width="48" height="48" viewBox="0 0 48 48" fill="none" stroke="#888" strokeWidth="4">
      <rect x="4" y="3.500" width="40" height="41" rx="2" />
    </svg>
  </div>
);

const App: React.FC = () => {
  return (
    <div className="h-[2400px] w-[1080px] overflow-hidden bg-white font-[Roboto,'Noto_Sans_CJK_SC',sans-serif] whitespace-nowrap">
      <Header />
      <Stats />
      <Notice />
      <div className="h-[15px] bg-[#f7f7f7]" />
      <Tabs />
      <InfoRow />
      <div className="flex">
        <Chart />
        <OrderBook />
      </div>
      <Chips />
      <div className="ml-[150px] h-[26px] rounded-tl-[10px] bg-[#f7f7f7]" />
      <TradeBar />
      <NavBar />
    </div>
  );
};

export default App;
